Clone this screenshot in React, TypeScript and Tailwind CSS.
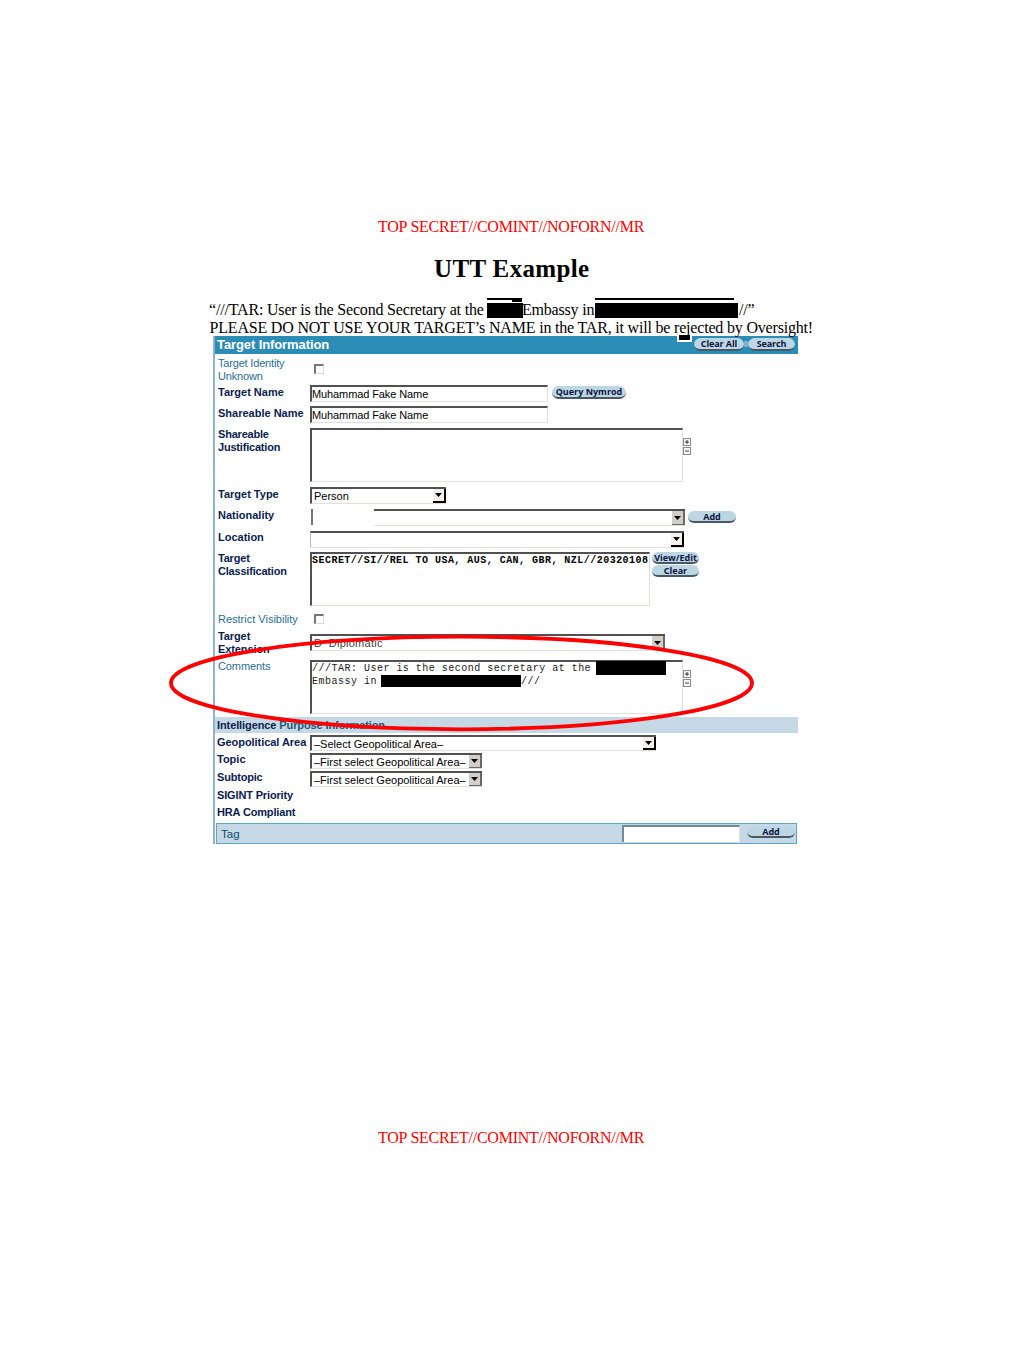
import type { ReactNode } from "react";

function Row({ h, label, labelClass = "", children }: { h: string; label?: ReactNode; labelClass?: string; children?: ReactNode }) {
  return (
    <div className={`flex items-start ${h}`}>
      <div className={`w-[95px] shrink-0 pl-[3px] text-[11px] leading-[13px] font-bold whitespace-nowrap text-[#0b1c4e] ${labelClass}`}>{label}</div>
      {children}
    </div>
  );
}

const inset = "shrink-0 border-t-2 border-l-2 border-r border-b border-t-[#515151] border-l-[#515151] border-r-[#e6dedb] border-b-[#e6dedb] bg-white text-[11px] text-black whitespace-nowrap";

function Arrow({ dark = false, gray = false }: { dark?: boolean; gray?: boolean }) {
  return (
    <span
      className={`flex h-full w-[13px] shrink-0 items-center justify-center ${gray ? "bg-[#d3cdca]" : "bg-[#f3f0ee]"} ${
        dark ? "border-r-2 border-b-2 border-black" : "border-r-2 border-b border-[#696969]"
      }`}
    >
      <svg className="h-[4px] w-[7px]" viewBox="0 0 7 4">
        <path d="M0 0H7L3.5 4Z" fill="#000" />
      </svg>
    </span>
  );
}

function Pill({ children, className = "" }: { children: ReactNode; className?: string }) {
  return (
    <span
      className={`flex shrink-0 items-center justify-center rounded-full border-b-2 border-[#485866] bg-[#bdd6e4] font-['Open_Sans',sans-serif] text-[9px] leading-none font-bold whitespace-nowrap text-[#0b1440] ${className}`}
    >
      {children}
    </span>
  );
}

function Resize() {
  return (
    <div className="mt-[12px] flex flex-col gap-[1px]">
      {["M2 4H6M4 2V6", "M2 4H6"].map((d) => (
        <svg key={d} className="h-[8px] w-[8px]" viewBox="0 0 8 8">
          <rect x=".5" y=".5" width="7" height="7" fill="#f6f6f6" stroke="#8c8c8c" />
          <path d={d} stroke="#111" strokeWidth=".8" />
        </svg>
      ))}
    </div>
  );
}

function Check() {
  return <div className="ml-[4px] h-[10px] w-[10px] border-t-2 border-l-2 border-r border-b border-t-[#777] border-l-[#777] border-r-[#ddd6d2] border-b-[#ddd6d2]" />;
}

const light = "!font-normal !text-[#2a6e92]";

export default function App() {
  return (
    <div className="relative h-[1365px] w-[1024px] overflow-hidden bg-white font-['Liberation_Sans',Arial,sans-serif]">
      <div className="flex flex-col font-['Liberation_Serif',serif] text-black">
        <div className="mt-[217px] h-[20px] pl-[378px] text-[16px] leading-[20px] tracking-[-0.24px] whitespace-nowrap text-[#f00]">TOP SECRET//COMINT//NOFORN//MR</div>
        <h1 className="mt-[17px] h-[30px] pl-[434px] text-[25px] leading-[30px] font-bold tracking-[0.35px] whitespace-nowrap">UTT Example</h1>
        <div className="mt-[13px] flex h-[22px] items-start pl-[209px] text-[16px] leading-[26px] whitespace-nowrap">
          <span className="w-[278px] tracking-[-0.18px]">“///TAR: User is the Second Secretary at the</span>
          <span className="flex w-[35px] flex-col pt-[1px]">
            <span className="h-[2px] bg-black" />
            <span className="ml-auto h-[2px] w-[10px] bg-black" />
            <span className="mt-[1px] h-[15px] w-[36px] bg-black" />
          </span>
          <span className="w-[73px] tracking-[-0.2px]">Embassy in</span>
          <span className="flex w-[143px] flex-col pt-[1px]">
            <span className="h-[2px] w-[139px] bg-black" />
            <span className="mt-[3px] h-[15px] bg-black" />
          </span>
          <span className="pl-[1px] tracking-[-0.2px]">//”</span>
        </div>
        <div className="h-[17px] pl-[209.5px] text-[16px] leading-[18px] tracking-[-0.19px] whitespace-nowrap">PLEASE DO NOT USE YOUR TARGET’s NAME in the TAR, it will be rejected by Oversight!</div>
      </div>

      <div className="ml-[213px] w-[585px] border-l-2 border-[#8fb2cf]">
        <div className="flex h-[18px] items-start bg-[#2b8db5] pl-[2px] text-[13px] leading-[18px] font-bold tracking-[-0.1px] text-white">
          <span className="w-[460px]">Target Information</span>
          <span className="-mt-px h-[7px] w-[15px] border-2 border-t-0 border-white bg-black" />
          <Pill className="mt-[2px] ml-[2px] h-[13px] w-[50px]">Clear All</Pill>
          <span className="mt-[5px] h-[6px] w-[4px] bg-[#78b4cf]" />
          <Pill className="mt-[2px] h-[13px] w-[47px]">Search</Pill>
        </div>

        <Row h="h-[29px]" label={<>Target Identity<br />Unknown</>} labelClass={`pt-[3px] tracking-[-0.18px] ${light}`}>
          <div className="pt-[10px]"><Check /></div>
        </Row>
        <Row h="h-[21px]" label="Target Name" labelClass="pt-[3px]">
          <div className={`${inset} mt-[2px] h-[17px] w-[238px] leading-[15px] tracking-[-0.1px]`}>Muhammad Fake Name</div>
          <Pill className="mt-[3px] ml-[4px] h-[13px] w-[74px]">Query Nymrod</Pill>
        </Row>
        <Row h="h-[22px]" label="Shareable Name" labelClass="pt-[3px]">
          <div className={`${inset} mt-[2px] h-[17px] w-[238px] leading-[15px] tracking-[-0.1px]`}>Muhammad Fake Name</div>
        </Row>
        <Row h="h-[59px]" label={<>Shareable<br />Justification</>} labelClass="pt-[2px] tracking-[-0.2px]">
          <div className={`${inset} mt-[2px] h-[54px] w-[373px]`} />
          <Resize />
        </Row>
        <Row h="h-[22px]" label="Target Type" labelClass="pt-[3px]">
          <div className={`${inset} mt-[2px] flex h-[17px] w-[136px] justify-between !border-r-0 pl-[2px] leading-[15px]`}>Person<Arrow dark /></div>
        </Row>
        <Row h="h-[22px]" label="Nationality" labelClass="pt-[2px]">
          <div className="mt-[2px] ml-[1px] h-[16px] w-[63px] border-l-2 border-[#777]" />
          <div className={`${inset} mt-[2px] flex h-[17px] w-[311px] justify-end !border-r-0 !border-l-0`}><Arrow gray /></div>
          <Pill className="mt-[4px] ml-[3px] h-[12px] w-[48px]">Add</Pill>
        </Row>
        <Row h="h-[21px]" label="Location" labelClass="pt-[2px]">
          <div className={`${inset} mt-[2px] flex h-[17px] w-[374px] justify-end !border-r-0 !border-l !border-l-[#bbb]`}><Arrow dark /></div>
        </Row>
        <Row h="h-[59px]" label={<>Target<br />Classification</>} labelClass="pt-[2px] tracking-[-0.2px]">
          <div className={`${inset} mt-[2px] h-[54px] w-[340px] font-['Liberation_Mono',monospace] !text-[10px] leading-[14px] font-bold tracking-[0.47px]`}>SECRET//SI//REL TO USA, AUS, CAN, GBR, NZL//20320108</div>
          <div className="mt-[2px] ml-[2px] flex flex-col">
            <Pill className="h-[12px] w-[47px]">View/Edit</Pill>
            <Pill className="mt-[1px] h-[12px] w-[47px]">Clear</Pill>
          </div>
        </Row>
        <Row h="h-[23px]" label="Restrict Visibility" labelClass={`pt-[4px] ${light}`}>
          <div className="pt-[5px]"><Check /></div>
        </Row>
        <Row h="h-[26px]" label={<>Target<br />Extension</>} labelClass="-mt-[2px] tracking-[-0.1px]">
          <div className={`${inset} mt-[2px] flex h-[17px] w-[355px] justify-between !border-r-0 pl-[2px] leading-[15px] tracking-[0.25px] !text-[#444]`}>D&nbsp; Diplomatic<Arrow gray /></div>
        </Row>
        <Row h="h-[59px]" label="Comments" labelClass={`pt-[2px] tracking-[-0.1px] ${light}`}>
          <div className={`${inset} mt-[2px] h-[54px] w-[373px] font-['Liberation_Mono',monospace] !text-[10px] leading-[13px] tracking-[0.49px] !text-[#222]`}>
            <div className="flex h-[13px] items-start">
              <span className="w-[284px]">///TAR: User is the second secretary at the</span>
              <span className="-mt-px h-[14px] w-[70px] bg-black" />
            </div>
            <div className="flex h-[13px] items-start">
              <span className="w-[69px]">Embassy in</span>
              <span className="h-[12px] w-[140px] bg-black" />
              <span>///</span>
            </div>
          </div>
          <Resize />
        </Row>
        <div className="h-[16px] bg-[#c4d9e5] pl-[2px] text-[11px] leading-[17px] font-bold tracking-[-0.1px] text-[#0b1c4e]">
          Intelligence <span className="text-[#205779]">Purpose Information</span>
        </div>
        <Row h="h-[18px]" label="Geopolitical Area" labelClass="!pl-[2px] pt-[3px] tracking-[-0.05px]">
          <div className={`${inset} mt-[2px] flex h-[16px] w-[346px] justify-between !border-r-0 pl-[2px] leading-[15px]`}>–Select Geopolitical Area–<Arrow dark /></div>
        </Row>
        <Row h="h-[18px]" label="Topic" labelClass="!pl-[2px] pt-[2px]">
          <div className={`${inset} mt-[2px] flex h-[16px] w-[172px] justify-between !border-r-0 pl-[2px] leading-[14px]`}>–First select Geopolitical Area–<Arrow gray /></div>
        </Row>
        <Row h="h-[18px]" label="Subtopic" labelClass="!pl-[2px] pt-[2px] tracking-[-0.2px]">
          <div className={`${inset} mt-[2px] flex h-[16px] w-[172px] justify-between !border-r-0 pl-[2px] leading-[14px]`}>–First select Geopolitical Area–<Arrow gray /></div>
        </Row>
        <Row h="h-[17px]" label="SIGINT Priority" labelClass="!pl-[2px] pt-[2px] tracking-[-0.15px]" />
        <Row h="h-[19px]" label="HRA Compliant" labelClass="!pl-[2px] pt-[2px] tracking-[-0.15px]" />
        <div className="mr-px ml-px flex h-[21px] items-start border border-[#5fa5c4] bg-[#c4d9e5] text-[11.5px] leading-[21px] text-[#0e4a6d]">
          <span className="w-[405px] pl-[4px]">Tag</span>
          <span className="mt-px h-[17px] w-[118px] border-t-2 border-l-2 border-r border-[#728b98] border-r-[#e6dedb] bg-white" />
          <Pill className="mt-[2px] ml-[7px] h-[12px] w-[48px]">Add</Pill>
        </div>
      </div>

      <svg className="pointer-events-none absolute top-[630px] left-[165px] h-[106px] w-[595px]" viewBox="165 630 595 106">
        <ellipse cx="461.5" cy="683" rx="290.5" ry="46.3" fill="none" stroke="#f00" strokeWidth="3.8" />
      </svg>

      <div className="mt-[284px] h-[20px] pl-[378px] font-['Liberation_Serif',serif] text-[16px] leading-[20px] tracking-[-0.24px] whitespace-nowrap text-[#f00]">TOP SECRET//COMINT//NOFORN//MR</div>
    </div>
  );
}
